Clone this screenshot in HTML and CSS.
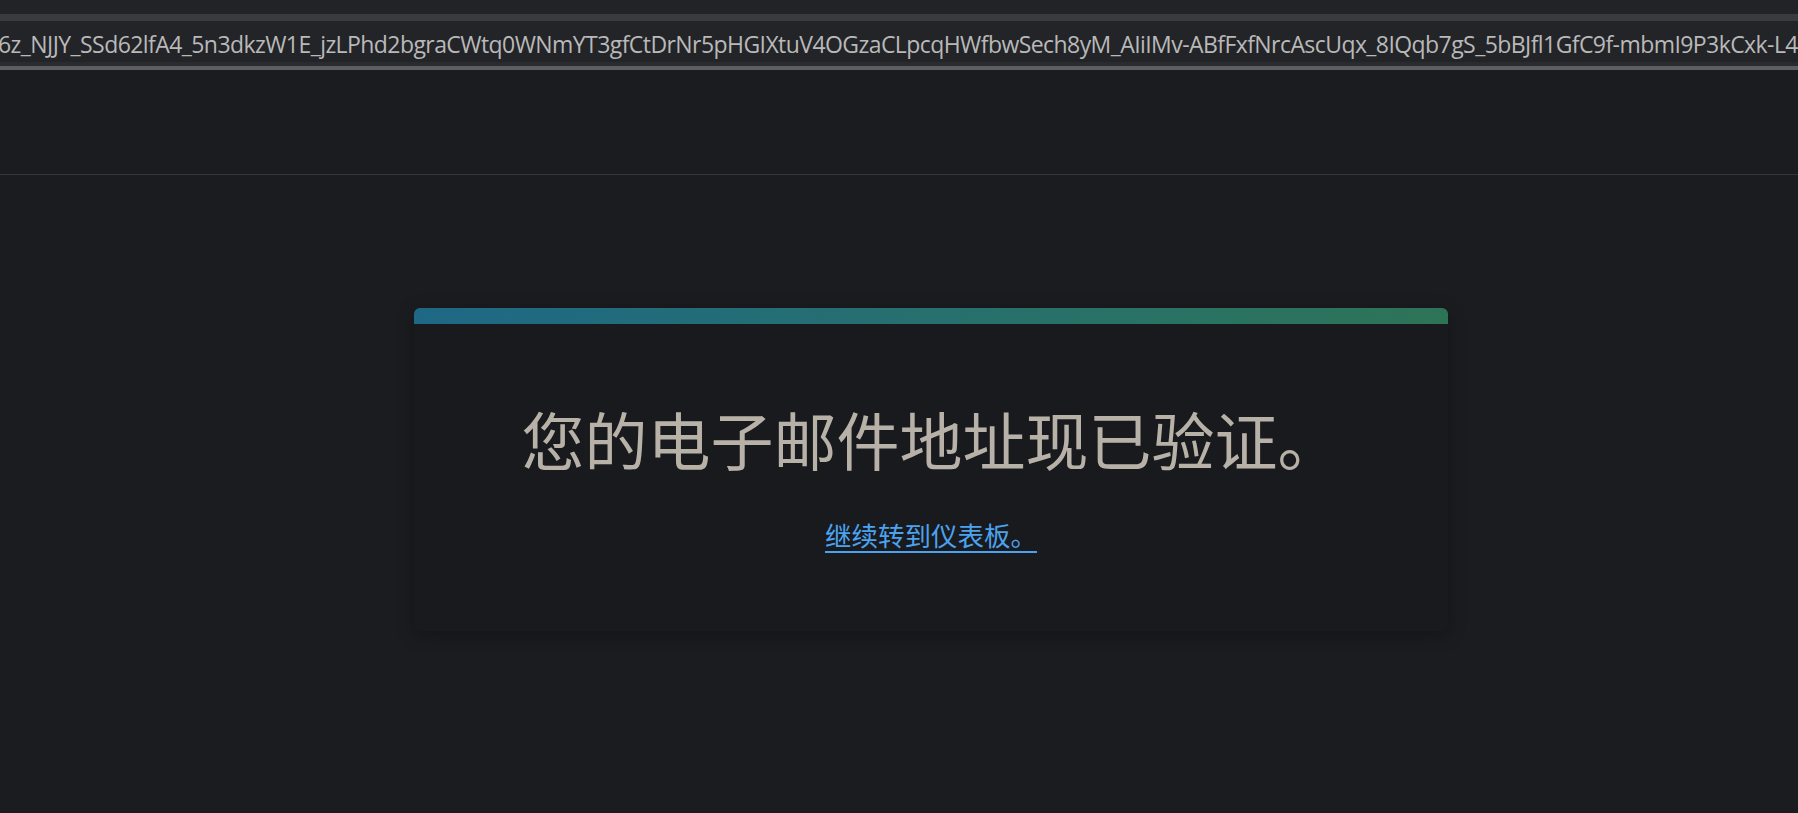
FILE: index.html
```html
<!DOCTYPE html>
<html lang="zh-CN">
<head>
<meta charset="utf-8">
<title>电子邮件已验证</title>
<link rel="stylesheet" href="styles.css">
</head>
<body>
<div class="browser-top"></div>
<div class="browser-band"></div>
<div class="url-row"><span class="url-text">6z_NJJY_SSd62lfA4_5n3dkzW1E_jzLPhd2bgraCWtq0WNmYT3gfCtDrNr5pHGIXtuV4OGzaCLpcqHWfbwSech8yM_AIiIMv-ABfFxfNrcAscUqx_8IQqb7gS_5bBJfl1GfC9f-mbmI9P3kCxk-L4</span></div>
<div class="browser-gap"></div>
<div class="browser-line"></div>
<header class="app-header"></header>
<main class="main">
  <section class="card">
    <div class="card-bar"></div>
    <div class="card-body">
      <h1 class="title">您的电子邮件地址现已验证。</h1>
      <a class="link" href="#">继续转到仪表板。</a>
    </div>
  </section>
</main>
</body>
</html>
```
FILE: styles.css
```css
html, body {
  margin: 0;
  padding: 0;
  background: #1b1c1f;
  height: 100%;
  overflow: hidden;
}
body {
  font-family: "Noto Sans CJK SC", "Noto Sans", sans-serif;
}
.browser-top {
  height: 14px;
  background: #222327;
}
.browser-band {
  height: 7px;
  background: #3a3b3f;
}
.url-row {
  height: 41px;
  background: #232428;
  display: flex;
  align-items: center;
  overflow: hidden;
  white-space: nowrap;
}
.url-text {
  font-family: "Open Sans", "Noto Sans", sans-serif;
  font-size: 23px;
  letter-spacing: -0.57px;
  color: #b9b9b9;
  margin-left: -2px;
  margin-top: 4px;
}
.browser-gap {
  height: 4px;
  background: #2a2b2e;
}
.browser-line {
  height: 4px;
  background: #5d5e60;
}
.app-header {
  height: 104px;
  border-bottom: 1px solid #35363a;
}
.main {
  display: flex;
  justify-content: center;
  padding: 133px 0 0 64px;
}
.card {
  width: 1034px;
  background: #191a1d;
  border-radius: 6px;
  box-shadow: 0 4px 18px rgba(0, 0, 0, 0.28);
}
.card-bar {
  height: 16px;
  border-radius: 6px 6px 0 0;
  background: linear-gradient(90deg, #1e6886 0%, #26706e 50%, #2d7457 100%);
}
.card-body {
  display: flex;
  flex-direction: column;
  align-items: center;
  padding: 74px 0 78px;
}
.title {
  margin: 0;
  font-size: 63px;
  font-weight: 400;
  line-height: 80px;
  color: #b7b1a8;
}
.link {
  margin-top: 39px;
  font-size: 26.5px;
  line-height: 36px;
  color: #4ba3ef;
  text-decoration: underline;
  text-underline-offset: 5px;
  text-decoration-thickness: 2px;
}
```
